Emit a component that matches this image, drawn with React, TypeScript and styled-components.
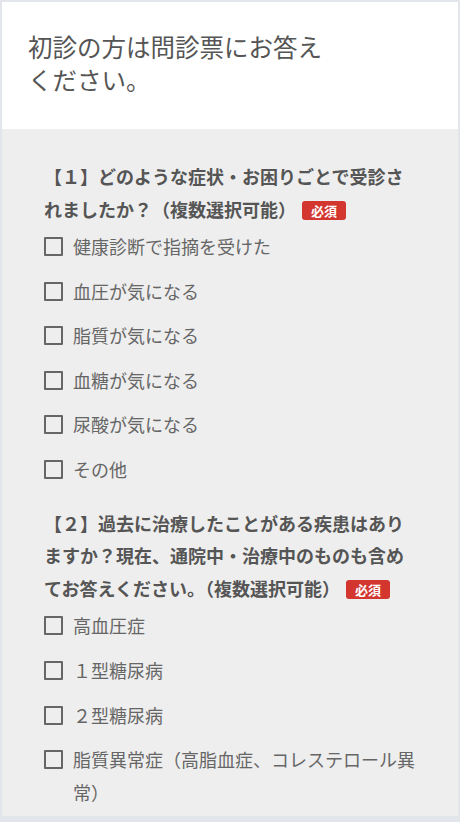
import React from "react";
import styled, { createGlobalStyle } from "styled-components";

const GlobalStyle = createGlobalStyle`
  html, body {
    margin: 0;
    padding: 0;
    background: #e2e6eb;
  }
  body {
    font-family: "Noto Sans CJK JP", "Noto Sans", sans-serif;
  }
`;

const Card = styled.div`
  width: 460px;
  box-sizing: border-box;
  border: 2px solid #e2e6eb;
  border-bottom-width: 3px;
  background: #eeeeee;
`;

const Header = styled.header`
  background: #ffffff;
  padding: 28px 26px 33px 26px;
`;

const Title = styled.h1`
  margin: 0;
  max-width: 300px;
  font-size: 24.5px;
  line-height: 33px;
  font-weight: 400;
  color: #555555;
`;

const Form = styled.div`
  padding: 31px 38px 7px 42px;
`;

const Question = styled.fieldset`
  border: none;
  margin: 0;
  padding: 0;

  & + & {
    margin-top: 21px;
  }
`;

const QuestionText = styled.p`
  margin: 0;
  font-size: 18px;
  line-height: 32.5px;
  font-weight: 700;
  color: #555555;
`;

const Required = styled.span`
  display: inline-block;
  width: 44px;
  height: 19px;
  margin-left: 6px;
  border-radius: 3px;
  background: #d3362f;
  color: #ffffff;
  font-size: 13px;
  font-weight: 700;
  line-height: 19px;
  text-align: center;
  vertical-align: 1px;
`;

const Options = styled.div`
  display: flex;
  flex-direction: column;
  gap: 11.6px;
  margin-top: 5px;
`;

const Option = styled.label`
  display: flex;
  align-items: flex-start;
  font-size: 18px;
  line-height: 33px;
  color: #666666;
  cursor: pointer;
`;

const Box = styled.span`
  flex: none;
  width: 19px;
  height: 19px;
  box-sizing: border-box;
  margin: 7px 10px 0 0;
  border: 2px solid #666666;
  border-radius: 1px;
`;

const questions = [
  {
    text: "【１】どのような症状・お困りごとで受診されましたか？（複数選択可能）",
    options: [
      "健康診断で指摘を受けた",
      "血圧が気になる",
      "脂質が気になる",
      "血糖が気になる",
      "尿酸が気になる",
      "その他",
    ],
  },
  {
    text: "【２】過去に治療したことがある疾患はありますか？現在、通院中・治療中のものも含めてお答えください。（複数選択可能）",
    options: [
      "高血圧症",
      "１型糖尿病",
      "２型糖尿病",
      "脂質異常症（高脂血症、コレステロール異常）",
    ],
  },
];

export default function App() {
  return (
    <>
      <GlobalStyle />
      <Card>
        <Header>
          <Title>初診の方は問診票にお答えください。</Title>
        </Header>
        <Form>
          {questions.map((q) => (
            <Question key={q.text}>
              <QuestionText>
                {q.text}
                <Required>必須</Required>
              </QuestionText>
              <Options>
                {q.options.map((o) => (
                  <Option key={o}>
                    <Box />
                    <span>{o}</span>
                  </Option>
                ))}
              </Options>
            </Question>
          ))}
        </Form>
      </Card>
    </>
  );
}
